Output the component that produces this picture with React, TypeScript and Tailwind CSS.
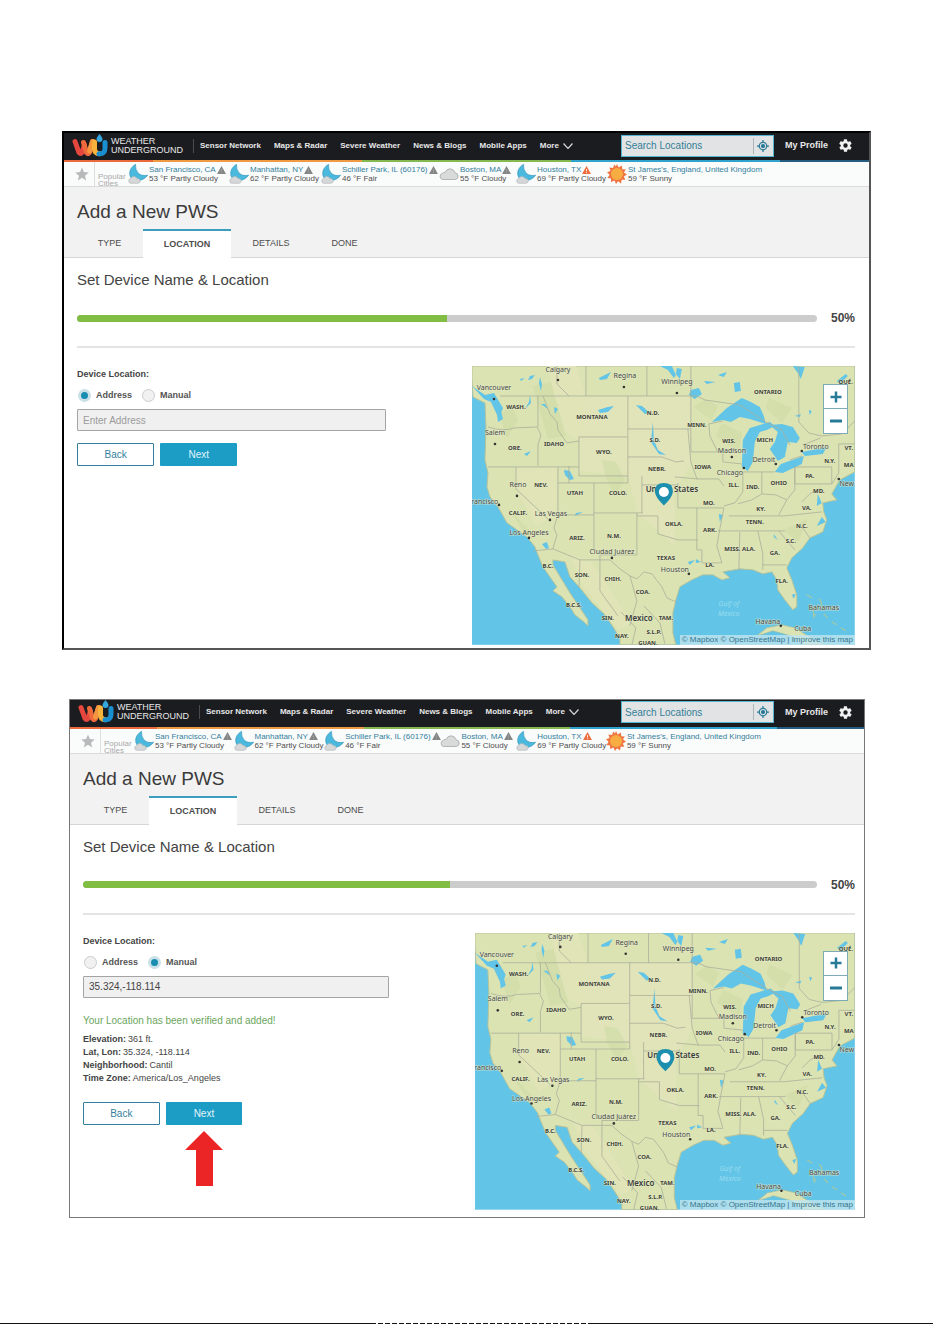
import { useId, useState } from "react";

type City = {
  name: string;
  weather: string;
  icon: "night" | "cloud" | "sun";
  alert?: "grey" | "orange";
};

const cities: City[] = [
  { name: "San Francisco, CA", weather: "53 °F Partly Cloudy", icon: "night", alert: "grey" },
  { name: "Manhattan, NY", weather: "62 °F Partly Cloudy", icon: "night", alert: "grey" },
  { name: "Schiller Park, IL (60176)", weather: "46 °F Fair", icon: "night", alert: "grey" },
  { name: "Boston, MA", weather: "55 °F Cloudy", icon: "cloud", alert: "grey" },
  { name: "Houston, TX", weather: "69 °F Partly Cloudy", icon: "night", alert: "orange" },
  { name: "St James's, England, United Kingdom", weather: "59 °F Sunny", icon: "sun" },
];

const navItems = ["Sensor Network", "Maps & Radar", "Severe Weather", "News & Blogs", "Mobile Apps"];

function Logo() {
  return (
    <svg viewBox="0 0 36 24" className="h-6 w-9 shrink-0" fill="none" aria-hidden="true">
      <path d="M3 7.500 7 18.500q1.500 2 3 0L12.500 11" stroke="#e5473f" strokeWidth="5" strokeLinecap="round" />
      <path d="M11.500 8.500l3 10q1.500 2.500 3 0L20.500 7.500" stroke="#ee6a3c" strokeWidth="5" strokeLinecap="round" />
      <path d="M17.500 17 20.500 7.500" stroke="#f4953f" strokeWidth="5" strokeLinecap="round" />
      <path d="M22.500 8v6.500q0 5.200 5 5.200" stroke="#f7b23c" strokeWidth="5" strokeLinecap="round" />
      <path d="M27 19.700q6 .5 6-5.700V8.500" stroke="#1a8fd0" strokeWidth="5" strokeLinecap="round" />
      <path d="M27.500 0q3 3.500 3 5a3 3 0 0 1-6 0q0-1.500 3-5z" fill="#35a7df" />
    </svg>
  );
}

function WeatherIcon({ kind }: { kind: City["icon"] }) {
  if (kind === "sun") {
    return (
      <svg viewBox="0 0 20 20" className="h-5 w-5 shrink-0" aria-hidden="true">
        <path
          d="M10 0l1.700 3.400L15 1.500l.2 3.700 3.600.2-1.900 3.100L20 10.500l-3.200 1.900 1.500 3.300-3.700.1-.5 3.600-3-2.100L9 20l-1.500-3.400-3.500 1.500.1-3.700-3.700-.5L2.600 10.800 0 8.200l3.500-1.200L2.400 3.500l3.700.4L7.200.4 9 2.500z"
          fill="#ef7541"
        />
        <circle cx="10" cy="10" r="6" fill="#f8ad43" />
      </svg>
    );
  }
  if (kind === "cloud") {
    return (
      <svg viewBox="0 0 20 20" className="h-5 w-5 shrink-0" aria-hidden="true">
        <path
          d="M3.500 15.500a3.200 3.200 0 0 1 0-6.200Q4.500 8.200 6.200 8.400 7.500 4.600 11.300 4.800q3.700.3 4.700 4a3.400 3.400 0 0 1 .5 6.700z"
          fill="#d9dada"
          stroke="#a5a7a8"
          strokeWidth="0.800"
        />
      </svg>
    );
  }
  return (
    <svg viewBox="0 0 20 20" className="h-5 w-5 shrink-0" aria-hidden="true">
      <path d="M7.500.3Q.8 4.500 1.800 11q1.400 6 8 5.600 6.500-.6 9.800-5.400-6 1.400-9.600-2.200Q7 5.500 7.500.3z" fill="#4bb9dd" stroke="#3597bd" strokeWidth="0.700" />
      <path
        d="M2.500 19.300a2.400 2.400 0 0 1 .2-4.700q1-2.600 3.800-2.100 1.800.3 2.500 2.100 3-.2 3.200 2.300.1 2-2.200 2.400z"
        fill="#d5d7d8"
        stroke="#aeb1b3"
        strokeWidth="0.600"
      />
    </svg>
  );
}

function Alert({ tone }: { tone: "grey" | "orange" }) {
  return (
    <svg viewBox="0 0 10 9" className="h-2 w-[9px] shrink-0" aria-hidden="true">
      <path d="M5 0l5 9H0z" fill={tone === "grey" ? "#858585" : "#ee6c3d"} />
      <path d="M5 3.500v2.500M5 7v1" stroke={tone === "grey" ? "#a5a5a5" : "#fff"} strokeWidth="1" />
    </svg>
  );
}

function Gear() {
  return (
    <svg viewBox="0 0 24 24" className="h-[15px] w-[15px]" aria-hidden="true">
      <path
        fill="#f1f1f1"
        fillRule="evenodd"
        d="M19.400 13a7.500 7.500 0 0 0 0-2l2.100-1.600a.5.5 0 0 0 .1-.7l-2-3.400a.5.5 0 0 0-.6-.2l-2.500 1a7.300 7.300 0 0 0-1.700-1l-.4-2.600a.5.5 0 0 0-.5-.5h-4a.5.5 0 0 0-.5.500l-.4 2.600a7.700 7.700 0 0 0-1.700 1l-2.500-1a.5.5 0 0 0-.6.2l-2 3.400a.5.5 0 0 0 .1.700L4.500 11a8 8 0 0 0 0 2l-2.100 1.600a.5.5 0 0 0-.1.700l2 3.400c.1.200.4.300.6.200l2.500-1a7.300 7.300 0 0 0 1.700 1l.4 2.600c0 .3.200.5.500.5h4c.3 0 .5-.2.500-.5l.4-2.600a7.700 7.700 0 0 0 1.700-1l2.500 1c.2.100.5 0 .6-.2l2-3.400a.5.5 0 0 0-.1-.7zM12 15.500a3.500 3.500 0 1 1 0-7 3.500 3.500 0 0 1 0 7z"
      />
    </svg>
  );
}

type Label = [number, number, string];

const stateLabels: Label[] = [
  [44, 43, "WASH."], [120, 53, "MONTANA"], [181, 49, "N.D."], [183, 76, "S.D."], [43, 84, "ORE."],
  [82, 80, "IDAHO"], [132, 88, "WYO."], [185, 105, "NEBR."], [69, 121, "NEV."], [103, 129, "UTAH"],
  [146, 129, "COLO."], [225, 61, "MINN."], [257, 77, "WIS."], [293, 76, "MICH"], [231, 103, "IOWA"],
  [262, 121, "ILL."], [281, 123, "IND."], [307, 119, "OHIO"], [338, 112, "PA."], [358, 97, "N.Y."],
  [377, 84, "VT."], [377, 101, "MA"], [347, 127, "MD."], [237, 139, "MO."], [289, 145, "KY."],
  [335, 144, "VA."], [46, 149, "CALIF."], [105, 174, "ARIZ."], [142, 172, "N.M."], [202, 160, "OKLA."],
  [238, 166, "ARK."], [283, 158, "TENN."], [330, 162, "N.C."], [319, 177, "S.C."], [268, 185, "MISS. ALA."],
  [303, 189, "GA."], [238, 201, "LA."], [194, 194, "TEXAS"], [310, 217, "FLA."], [76, 202, "B.C."],
  [110, 211, "SON."], [141, 215, "CHIH."], [171, 228, "COA."], [102, 241, "B.C.S."], [136, 254, "SIN."],
  [194, 254, "TAM."], [182, 268, "S.L.P."], [150, 272, "NAY."], [176, 279, "GUAN."], [296, 28, "ONTARIO"],
  [374, 18, "QUÉ."],
];

const cityLabels: Label[] = [
  [86, 6, "Calgary"], [153, 12, "Regina"], [205, 18, "Winnipeg"], [22, 24, "Vancouver"], [23, 69, "Salem"],
  [46, 121, "Reno"], [11, 138, "Francisco"], [79, 150, "Las Vegas"], [57, 169, "Los Angeles"],
  [140, 188, "Ciudad Juárez"], [203, 206, "Houston"], [260, 87, "Madison"], [258, 109, "Chicago"],
  [292, 96, "Detroit"], [344, 83, "Toronto"], [375, 120, "New"], [352, 244, "Bahamas"], [296, 258, "Havana"],
  [331, 265, "Cuba"],
];

const cityDots = [
  [86, 14], [152, 21], [205, 27], [22, 33], [23, 78], [45, 130], [27, 139], [78, 154], [57, 172],
  [140, 192], [217, 208], [260, 91], [272, 102], [304, 98], [330, 85], [367, 113], [309, 260],
];

const borders = [
  "M28 30H225L233 34 268 39 294 56 310 64M85 0V18L97 30M114 0V30M175 0V30M219 0V30",
  "M16 61Q32 66 42 62L65 61 69 69 66 79V100M66 30V61M71 30L78 48 85 56 86 64 95 77 107 75M16 101H107M44 101V123L76 153M86 101V149L82 162 85 169 81 183",
  "M107 71H156M107 71V110H156V30M156 63H218M156 91H190L204 96 212 95M156 110V117H122V185M86 117H122M97 100V117M170 110V119H206M170 119V147M122 147H171M86 149H122M165 147V189H128V194H108L81 183 62 185",
  "M165 150H186V168L206 174 226 174M206 117V142H225V184M219 30V86H251M216 63L219 96 225 113H247L252 120M246 86L238 70 237 58 251 55M251 86V96L270 98M203 111L226 113M225 142H252L248 163 245 180 250 197H230V184H225",
  "M271 106V126L263 137 252 140M290 106V128L280 134 266 138M271 106H303M323 101H360V118H323zM323 101V124L315 134 304 129 290 128M257 150H312L350 146M246 165H313M268 166L267 205M286 165L291 188 291 204M291 199H315M307 165L323 184M331 162L338 172M315 134L307 149M330 136L338 128 349 122",
  "M128 194H138L148 203 158 210 165 213 172 206 180 208 190 221 195 232 204 236M108 194L107 222M128 194V225L146 250M158 210L165 235 158 260M172 240L188 257 193 278M149 246L164 262 160 279",
  "M327 0V56L337 67 350 70 370 68 383 55M360 118L367 107 367 78M367 78H383M310 64L318 79M318 94L330 90M331 79L349 72",
];

function UsMap() {
  return (
    <svg viewBox="0 0 383 279" className="block w-full" role="img" aria-label="Map of the United States">
      <rect width="383" height="279" fill="#62c4e6" />
      <path
        d="M0 0H383V106L368 114 360 128 365 134 351 137 352 146 355 154 351 166 338 172 331 182 320 192 315 202 320 214 325 229 325 241 321 244 313 234 306 224 305 214 300 206 291 208 281 204 268 203 251 206 258 212 250 214 241 209 231 209 220 214 208 221 204 234 201 247 201 267 204 279H148V272L141 261 133 249 120 237 108 222 98 211 93 196 81 194V199L90 214 98 227 108 242 116 254V260L113 257 103 249 98 241 90 231 81 225 85 221 80 214 71 201 66 189 63 181 55 171 35 157 26 141 18 131 15 121 16 107 13 94 14 61 13 37 1 31 0 14z"
        fill="#dbe3b2"
        stroke="#b6c39a"
        strokeWidth="1"
        strokeLinejoin="round"
      />
      <path d="M109 30H219V63L219 98 203 125 203 180 165 147 156 110 107 105z" fill="#e4e3bd" opacity="0.600" />
      <path d="M76 0H104L114 30 107 75 90 64 82 30zM44 101H86V147L64 160 44 123zM98 188L120 196 160 258 147 264 112 222z" fill="#e0e4b7" />
      <path d="M27 48L40 40 46 54 35 72zM61 20L79 16 94 70 76 73zM130 94L144 96 153 114 143 129 134 112zM37 143L62 169 54 170zM234 33L246 40 240 54 222 41zM250 57L270 67 267 86 244 70zM297 32L320 42 310 57 294 42zM312 164L336 153 326 176z" fill="#cddba5" opacity="0.600" />
      <g fill="#62c4e6">
        <path d="M0 20l13 9 9-2 9 15-4 11-8-17-7-3zM25 48l4-3 2 8-5 3z" />
        <path d="M240 56l15-14 15-10 9 4 9 5 4 9 2 8-16-5-10-2-9 5-8-2z" />
        <path d="M270 101l1-27 7-12 20-6 5 4-8 4-7 2-5 10-2 20-5 9z" />
        <path d="M298 59l12-1 11 3 7 11-3 5-9-1-3 15-7 4-8-12 5-7 3-10z" />
        <path d="M303 106l6-8 23-8-2 8-19 9zM330 86l25-5-4 7-18 2z" />
        <path d="M92 104l6 1 4 8-4 1-5-5zM164 39l6 1 8 7-5 1zM126 44l10-3 6-1-6 6-8 1zM181 56l1 18 4 10 8 5-7-1-8-12zM127 12l8-4 4-2-4 7-7 1zM68 11l2 7-1 7-2-8zM58 10l5-1-3 4-4 1zM48 13l5-1-4 3zM82 41l4 2-3 5zM57 36l1-7 1 8-6 6zM76 43l-3-5-4 0zM52 88l7-3-4 5zM188 0h12l4 9-2 3-6-8zM205 2l5 1-2 10-4-5zM219 24l8-2 3 6-7 5-6-4zM262 17l6-1 1 9-6 1zM232 15l12 1-9 2zM246 9l9-3-3 5zM321 0l12 1-4 12-3-6zM337 44l3 1-2 4zM323 50l6-2-1 3zM365 15l9-7 2 2-8 8zM353 24l14-6-8 7zM104 147l7-1-8 4zM70 178l5-2 2 6-3 1zM247 148l4 1-3 7zM320 229l4-1-2 5zM350 151l4 5-9 4zM350 137l-5 3 1-12zM216 196l7-2-5 5zM224 193l5 3-5 1zM302 168l4 6-4-3z" />
      </g>
      <path d="M285 270l10-8 15-3 13 3 8 5 14 8 9 4H332l-13-9-18-5-9 3z" fill="#dbe3b2" stroke="#a9bd9b" strokeWidth="0.700" />
      <path d="M335 229l5 3M347 233l3 4-2 5M341 242l1 9 2-3M352 248l4 4M360 256l5 3M369 262l5 3" fill="none" stroke="#a5c9a4" strokeWidth="1.200" />
      <g fill="none" stroke="#aab09b" strokeWidth="0.800">
        {borders.map((d) => (
          <path key={d} d={d} />
        ))}
      </g>
      <g fill="#333">
        {cityDots.map(([x, y]) => (
          <circle key={`${x}-${y}`} cx={x} cy={y} r="1.300" />
        ))}
      </g>
      <g fontFamily="'Noto Sans', sans-serif" textAnchor="middle" paintOrder="stroke" stroke="#e6eac9" strokeWidth="1.200" strokeOpacity="0.700">
        <g fontSize="6" fontWeight="700" fill="#3d4238">
          {stateLabels.map(([x, y, text]) => (
            <text key={text} x={x} y={y}>{text}</text>
          ))}
        </g>
        <g fontSize="7" fill="#45494a">
          {cityLabels.map(([x, y, text]) => (
            <text key={text} x={x} y={y}>{text}</text>
          ))}
        </g>
        <g fontSize="8" fontWeight="600" fill="#393c3a">
          <text x="200" y="126">United States</text>
          <text x="167" y="255">Mexico</text>
        </g>
      </g>
      <g fontFamily="'Noto Sans', sans-serif" fontSize="7" fontStyle="italic" textAnchor="middle" fill="#9adcf0">
        <text x="257" y="240">Gulf of</text>
        <text x="257" y="250">Mexico</text>
      </g>
      <path d="M192 117q9 0 9 8.500 0 5.500-9 14-9-8.500-9-14 0-8.500 9-8.500z" fill="#1c8eae" />
      <circle cx="192" cy="126" r="5" fill="#fff" />
    </svg>
  );
}

type Mode = "address" | "manual";

function StationSetup({ initial, frame, gutter }: { initial: Mode; frame: string; gutter: string }) {
  const id = useId();
  const [mode, setMode] = useState<Mode>(initial);
  const [address, setAddress] = useState("");
  const [coords, setCoords] = useState("35.324,-118.114");
  const manual = mode === "manual";

  return (
    <section className={`bg-white ${frame}`}>
      <header className="flex h-[27px] items-center bg-[#1b1c20] pb-[2px] pl-2 text-[8px] font-bold text-[#e8e8e8]">
        <a href="#home" className="flex w-[121px] shrink-0 items-center gap-[3px] text-[9px] font-normal leading-[9px]">
          <Logo />
          <span>WEATHER<br />UNDERGROUND</span>
        </a>
        <nav className="flex h-[14px] items-center gap-[13px] whitespace-nowrap border-l border-[#4a4b50] pl-[6px]">
          {navItems.map((item) => (
            <a key={item} href="#nav">{item}</a>
          ))}
          <button type="button" className="flex items-center gap-1">
            More
            <svg viewBox="0 0 10 6" className="h-[6px] w-[10px]" fill="none" stroke="#d5d5d5" strokeWidth="1.200" aria-hidden="true">
              <path d="M.5.5 5 5.500 9.500.5" />
            </svg>
          </button>
        </nav>
        <div className={`ml-auto flex items-center ${gutter}`}>
          <div className="flex h-[22px] w-[153px] items-center border border-[#55b4cf] bg-[#e2e3e4]">
            <input
              aria-label="Search Locations"
              placeholder="Search Locations"
              className="min-w-0 flex-1 bg-transparent pl-[3px] text-[10px] font-normal outline-none placeholder:text-[#347f98]"
            />
            <button type="button" aria-label="Use my location" className="flex h-4 w-5 items-center justify-center border-l border-[#aeb4b7]">
              <svg viewBox="0 0 24 24" className="h-3 w-3" fill="none" stroke="#2b7b98" strokeWidth="2.500" aria-hidden="true">
                <circle cx="12" cy="12" r="7.500" />
                <circle cx="12" cy="12" r="3" fill="#2b7b98" />
                <path d="M12 0v4.500M12 19.500V24M0 12h4.500M19.500 12H24" />
              </svg>
            </button>
          </div>
          <a href="#profile" className="ml-[11px] whitespace-nowrap text-[9px]">My Profile</a>
          <button type="button" aria-label="Settings" className="ml-[10px] mr-[2px]">
            <Gear />
          </button>
        </div>
      </header>
      <div className="h-[2px] bg-[linear-gradient(90deg,#ea6a3c_0_11%,#f09a43_11%_37%,#86b852_37%_63%,#2fa3cb_63%_89%,#255d80_89%)]" />

      <div className="flex h-[25px] items-center overflow-hidden border-b border-[#d8dadb] bg-[#fafbfb] text-[8px] text-[#4f4f4f]">
        <button type="button" aria-label="Favorites" className="flex h-full w-[31px] shrink-0 items-center justify-end border-r border-[#dedede] pr-[5px]">
          <svg viewBox="0 0 24 24" className="h-[14px] w-[14px]" fill="#b7b9ba" aria-hidden="true">
            <path d="M12 1l3.200 7.700 8.300.7-6.300 5.400 1.900 8.200-7.100-4.400L4.900 23l1.900-8.200L.5 9.400l8.300-.7z" />
          </svg>
        </button>
        <span className="h-full w-[33px] shrink-0 pl-[3px] pt-[11px] leading-[7px] text-[#a9a9a9]">Popular<br />Cities</span>
        <div className="grid min-w-0 flex-1 grid-cols-[101fr_92fr_118fr_77fr_91fr_262fr]">
          {cities.map((city) => (
            <a key={city.name} href="#city" className="flex min-w-0 items-center gap-px whitespace-nowrap">
              <WeatherIcon kind={city.icon} />
              <span className="leading-[9px]">
                <span className="flex items-center gap-px text-[#32809b]">
                  {city.name}
                  {city.alert && <Alert tone={city.alert} />}
                </span>
                {city.weather}
              </span>
            </a>
          ))}
        </div>
      </div>

      <div className="border-b border-[#d6d6d6] bg-[#f2f2f2] pt-[14px]">
        <h1 className="pl-[13px] text-[19px] leading-[22px] text-[#3b3b3b]">Add a New PWS</h1>
        <div role="tablist" className="-mb-px mt-[6px] flex h-[29px] text-[9px] text-[#4d4d4d]">
          <button type="button" role="tab" className="w-[79px] pl-3">TYPE</button>
          <button type="button" role="tab" aria-selected="true" className="w-[88px] border-t-2 border-[#3c9dbd] bg-white font-bold">LOCATION</button>
          <button type="button" role="tab" className="w-20">DETAILS</button>
          <button type="button" role="tab" className="w-[67px]">DONE</button>
        </div>
      </div>

      <div className={`pl-[13px] ${gutter}`}>
        <h2 className="pt-[12px] text-[15px] leading-5 text-[#444]">Set Device Name &amp; Location</h2>
        <div className="flex h-[58px] items-center border-b-2 border-[#e4e4e4]">
          <div role="progressbar" aria-valuenow={50} aria-label="Setup progress" className="h-[7px] flex-1 overflow-hidden rounded-full bg-[#cbcccb]">
            <div className="h-full w-1/2 bg-[#80bd42]" />
          </div>
          <span className="w-[38px] text-right text-[12px] font-bold text-[#444]">50%</span>
        </div>

        <div className="flex items-start justify-between pt-[18px]">
          <form className="w-[39.700%] shrink-0 text-[9px] text-[#444]" onSubmit={(event) => event.preventDefault()}>
            <fieldset>
              <legend className="font-bold leading-4">Device Location:</legend>
              <div className="flex h-[27px] items-center gap-[10px] pl-px">
                {(["address", "manual"] as Mode[]).map((value) => (
                  <label key={value} className="flex items-center gap-[5px] text-[9px] font-bold text-[#555]">
                    <input
                      type="radio"
                      name={`${id}-mode`}
                      checked={mode === value}
                      onChange={() => setMode(value)}
                      className="h-[13px] w-[13px] appearance-none rounded-full border border-[#c9cdce] bg-[#f1f1f1] checked:border-[3px] checked:border-[#cbe0e7] checked:bg-[#178db2]"
                    />
                    {value === "address" ? "Address" : "Manual"}
                  </label>
                ))}
              </div>
            </fieldset>
            <input
              aria-label={manual ? "Coordinates" : "Address"}
              value={manual ? coords : address}
              onChange={(event) => (manual ? setCoords(event.target.value) : setAddress(event.target.value))}
              placeholder="Enter Address"
              className="block h-[22px] w-full rounded-[1px] border border-[#a4a4a4] bg-[#f0f0f0] px-[5px] text-[10px] text-[#444] outline-none placeholder:text-[#9b9b9b]"
            />
            {manual && (
              <div className="pb-[5px] pt-[15px]">
                <p className="text-[10px] leading-4 text-[#6ba55d]">Your Location has been verified and added!</p>
                <dl className="pt-1 leading-[13px] text-[#444]">
                  {[
                    ["Elevation:", "361 ft."],
                    ["Lat, Lon:", "35.324, -118.114"],
                    ["Neighborhood:", "Cantil"],
                    ["Time Zone:", "America/Los_Angeles"],
                  ].map(([term, detail]) => (
                    <div key={term} className="flex gap-[2px]">
                      <dt className="font-bold">{term}</dt>
                      <dd>{detail}</dd>
                    </div>
                  ))}
                </dl>
              </div>
            )}
            <div className="flex gap-[6px] pt-3">
              <button type="button" className="h-[23px] w-1/4 rounded-[1px] border border-[#347f9d] bg-white text-[10px] text-[#347f9d]">Back</button>
              <button type="submit" className="h-[23px] w-1/4 rounded-[1px] bg-[#1c9dc6] text-[10px] text-[#e3f4fa]">Next</button>
            </div>
            {manual && (
              <svg viewBox="0 0 38 55" className="ml-[102px] mt-[6px] block h-[55px] w-[38px]" aria-hidden="true">
                <path d="M19 0 38 19H28V55H11V19H0z" fill="#eb2525" />
              </svg>
            )}
          </form>

          <div className="relative w-[49.200%]">
            <UsMap />
            <div className="absolute right-[7px] top-[18px] flex w-[25px] flex-col border border-[#7fabb8] bg-white">
              <button type="button" aria-label="Zoom in" className="flex h-6 items-center justify-center border-b border-[#7fabb8]">
                <svg viewBox="0 0 12 12" className="h-3 w-3" stroke="#287b97" strokeWidth="2.500" aria-hidden="true"><path d="M6 .5v11M.5 6h11" /></svg>
              </button>
              <button type="button" aria-label="Zoom out" className="flex h-6 items-center justify-center">
                <svg viewBox="0 0 12 12" className="h-3 w-3" stroke="#287b97" strokeWidth="3" aria-hidden="true"><path d="M0 6h12" /></svg>
              </button>
            </div>
            <p className="absolute bottom-0 right-0 whitespace-nowrap bg-[#bfe5f0]/80 px-[2px] text-[8px] leading-[10px] text-[#37758c]">
              <a href="#mapbox">© Mapbox</a> <a href="#osm">© OpenStreetMap</a> | <a href="#improve">Improve this map</a>
            </p>
          </div>
        </div>
      </div>
    </section>
  );
}

export default function App() {
  return (
    <main className="flex min-h-screen flex-col bg-white pt-[131px] font-['Liberation_Sans',Arial,sans-serif]">
      <div className="px-[62px]">
        <StationSetup initial="address" frame="border-2 border-black border-r-[#555] border-b-[#555] pb-[3px]" gutter="pr-[14px]" />
      </div>
      <div className="pl-[69px] pr-[68px] pt-[49px]">
        <StationSetup initial="manual" frame="border border-[#777] pb-[7px]" gutter="pr-[9px]" />
      </div>
      <div className="mt-auto h-px bg-[linear-gradient(90deg,#111_0_40%,transparent_40%_63%,#111_63%),repeating-linear-gradient(90deg,#111_0_5px,#fff_5px_7px)]" />
    </main>
  );
}
